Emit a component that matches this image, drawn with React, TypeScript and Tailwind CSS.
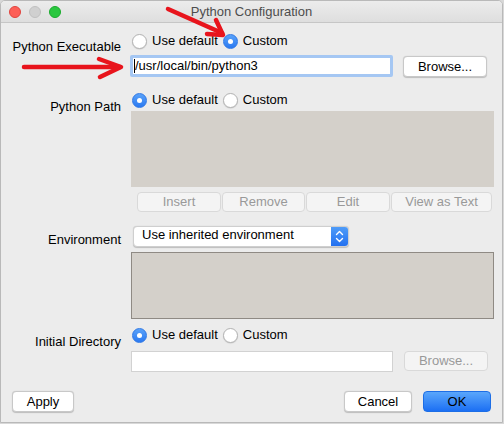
import React from "react";

function Radio({ checked, label }: { checked: boolean; label: string }) {
  return (
    <div className="flex items-center h-[18px]">
      {checked ? (
        <div className="w-[15px] h-[15px] rounded-full bg-gradient-to-b from-[#5aa2f9] to-[#2a79f1] border border-[#2f78e6] flex items-center justify-center">
          <div className="w-[5px] h-[5px] rounded-full bg-white" />
        </div>
      ) : (
        <div className="w-[15px] h-[15px] rounded-full bg-white border border-[#b3b3b3] shadow-[0_0.5px_1px_rgba(0,0,0,0.15)]" />
      )}
      <span className="ml-[5px] text-black leading-[16px]">{label}</span>
    </div>
  );
}

function Btn({
  children,
  w,
  h,
  disabled,
}: {
  children: React.ReactNode;
  w: string;
  h: string;
  disabled?: boolean;
}) {
  return (
    <div
      className={`${w} ${h} flex items-center justify-center rounded-[4px] border leading-[14px] ${
        disabled
          ? "bg-[#f4f4f4] border-[#d9d9d9] text-[#999999]"
          : "bg-white border-[#c8c8c8] text-black shadow-[0_0.5px_1px_rgba(0,0,0,0.2)]"
      }`}
    >
      {children}
    </div>
  );
}

export default function App() {
  return (
    <div className="w-[504px] h-[424px] bg-[#d8d8d8] relative font-['Liberation_Sans',Arial,sans-serif] text-[13px] overflow-hidden">
      <div className="w-[503px] h-[423px] bg-[#ececec] border border-[#b9b9b9] rounded-t-[5px] overflow-hidden flex flex-col">
        {/* Title bar */}
        <div className="h-[22px] shrink-0 border-b border-[#c6c6c6] bg-gradient-to-b from-[#ececec] to-[#dedede] grid grid-cols-[1fr_auto_1fr] items-center">
          <div className="flex items-center gap-[8px] pl-[8px]">
            <div className="w-[12px] h-[12px] rounded-full bg-[#fd5f57] border border-[#e0443e]" />
            <div className="w-[12px] h-[12px] rounded-full bg-[#d0d0d0] border border-[#c0c0c0]" />
            <div className="w-[12px] h-[12px] rounded-full bg-[#2ac73f] border border-[#1aab2d]" />
          </div>
          <div className="text-[#4d4d4d] leading-[16px]">Python Configuration</div>
          <div />
        </div>

        {/* Body */}
        <div className="flex flex-col pt-[9px]">
          {/* Python Executable */}
          <div className="flex">
            <div className="w-[120px] text-right pt-[7px] leading-[16px] text-black">Python Executable</div>
            <div className="ml-[9px] flex flex-col">
              <div className="flex items-center ml-[2px] gap-[5px]">
                <Radio checked={false} label="Use default" />
                <Radio checked={true} label="Custom" />
              </div>
              <div className="flex mt-[5px]">
                <div className="w-[263px] h-[22px] bg-white border-[3px] border-[#a5c7f3] rounded-[2px] flex items-center pl-[1px] text-black leading-[16px]">
                  <span className="w-[1px] h-[14px] bg-black" />
                  /usr/local/bin/python3
                </div>
                <div className="ml-[10px] mt-[1px]">
                  <Btn w="w-[84px]" h="h-[21px]">Browse...</Btn>
                </div>
              </div>
            </div>
          </div>

          {/* Python Path */}
          <div className="flex mt-[14px]">
            <div className="w-[120px] text-right pt-[8px] leading-[16px] text-black">Python Path</div>
            <div className="ml-[9px] flex flex-col">
              <div className="flex items-center ml-[2px] gap-[5px]">
                <Radio checked={true} label="Use default" />
                <Radio checked={false} label="Custom" />
              </div>
              <div className="mt-[2px] ml-[1px] w-[363px] h-[76px] bg-[#d4d0ca]" />
              <div className="flex mt-[5px] ml-[7px] gap-[1px]">
                <Btn w="w-[84px]" h="h-[20px]" disabled>Insert</Btn>
                <Btn w="w-[83px]" h="h-[20px]" disabled>Remove</Btn>
                <Btn w="w-[84px]" h="h-[20px]" disabled>Edit</Btn>
                <Btn w="w-[101px]" h="h-[20px]" disabled>View as Text</Btn>
              </div>
            </div>
          </div>

          {/* Environment */}
          <div className="flex mt-[14px]">
            <div className="w-[120px] text-right pt-[6px] leading-[16px] text-black">Environment</div>
            <div className="ml-[9px] flex flex-col">
              <div className="ml-[3px] w-[216px] h-[21px] flex rounded-[4px] bg-white border border-[#cfcfcf] shadow-[0_0.5px_1px_rgba(0,0,0,0.2)] overflow-hidden">
                <div className="flex-1 pl-[8px] pb-[3px] flex items-center text-black leading-[16px]">Use inherited environment</div>
                <div className="w-[17px] h-full bg-gradient-to-b from-[#4f9cf8] to-[#2370f0] flex items-center justify-center">
                  <svg width="9" height="13" viewBox="0 0 9 13" fill="none" stroke="white" strokeWidth="1.4" strokeLinecap="round" strokeLinejoin="round">
                    <path d="M1.5 4.5 L4.5 1.5 L7.5 4.5" />
                    <path d="M1.5 8.5 L4.5 11.5 L7.5 8.5" />
                  </svg>
                </div>
              </div>
              <div className="mt-[5px] ml-[1px] w-[363px] h-[67px] bg-[#d4d0ca] border border-[#8f8a84]" />
            </div>
          </div>

          {/* Initial Directory */}
          <div className="flex mt-[7px]">
            <div className="w-[120px] text-right pt-[8px] leading-[16px] text-black">Initial Directory</div>
            <div className="ml-[9px] flex flex-col">
              <div className="flex items-center ml-[2px] gap-[5px]">
                <Radio checked={true} label="Use default" />
                <Radio checked={false} label="Custom" />
              </div>
              <div className="flex mt-[7px]">
                <div className="ml-[1px] w-[262px] h-[21px] bg-white border border-[#d2d2d2]" />
                <div className="ml-[11px]">
                  <Btn w="w-[84px]" h="h-[20px]" disabled>Browse...</Btn>
                </div>
              </div>
            </div>
          </div>

          {/* Bottom buttons */}
          <div className="flex justify-between mt-[19px] px-[11px]">
            <Btn w="w-[62px]" h="h-[21px]">Apply</Btn>
            <div className="flex gap-[11px]">
              <Btn w="w-[68px]" h="h-[21px]">Cancel</Btn>
              <div className="w-[68px] h-[21px] rounded-[4px] bg-gradient-to-b from-[#5aa6fb] to-[#1b6ff3] border border-[#1d6ee6] flex items-center justify-center text-black leading-[14px]">
                OK
              </div>
            </div>
          </div>
        </div>
      </div>

      {/* Red annotation arrows */}
      <svg className="absolute left-0 top-0 pointer-events-none" width="504" height="424" fill="none" stroke="#e8141c" strokeWidth="4.5" strokeLinecap="round" strokeLinejoin="round">
        <path d="M168 9 L222 33" />
        <path d="M216 20 L223 35 L207 34" />
        <path d="M24 67 L120 67" />
        <path d="M99 59 L121 67 L100 77" />
      </svg>
    </div>
  );
}
